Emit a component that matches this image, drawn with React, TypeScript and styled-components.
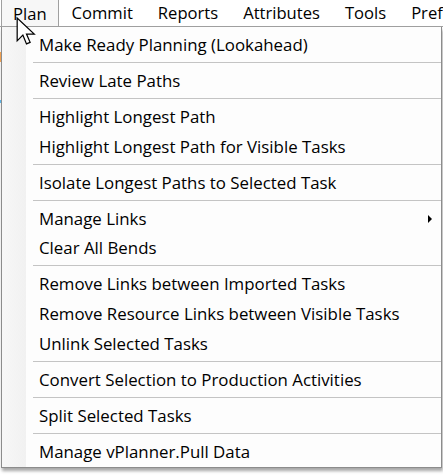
import React from "react";
import styled, { createGlobalStyle } from "styled-components";

const Global = createGlobalStyle`
  html, body { margin: 0; padding: 0; background: #ffffff; }
  body { font-family: "Open Sans", "Noto Sans", "Liberation Sans", sans-serif; color: #000; }
`;

const Page = styled.div`
  position: relative;
  width: 443px;
  height: 475px;
  overflow: hidden;
  background: #ffffff;
`;

const MenuBar = styled.div`
  display: flex;
  align-items: stretch;
  gap: 1px;
  height: 26px;
  border-bottom: 1px solid #a0a0a0;
  background: #ffffff;
  padding-left: 1px;
  overflow: hidden;
`;

const BarItem = styled.div<{ $active?: boolean }>`
  display: flex;
  align-items: center;
  flex: none;
  padding: 0 11px 1px 11px;
  font-size: 16.6px;
  white-space: nowrap;
  box-sizing: border-box;
  background: ${(p) => (p.$active ? "#f7f7f7" : "transparent")};
  border-left: 1px solid ${(p) => (p.$active ? "#a0a0a0" : "transparent")};
  border-right: 1px solid ${(p) => (p.$active ? "#a0a0a0" : "transparent")};
  margin-bottom: ${(p) => (p.$active ? "-1px" : "0")};
`;

const Dropdown = styled.div`
  margin-left: 1px;
  width: 441px;
  box-sizing: border-box;
  border: 1px solid #8c8c8c;
  border-top: none;
  padding: 3px 0 0 0;
  height: 441px;
  background:
    linear-gradient(to right, #f7f7f7 0px, #f1f1f1 24px, #fdfdfd 24px, #fdfdfd 100%);
  box-shadow: 1px 3px 3px rgba(0, 0, 0, 0.35);
  display: flex;
  flex-direction: column;
`;

const Item = styled.div`
  position: relative;
  height: 30px;
  display: flex;
  align-items: center;
  padding-left: 37px;
  padding-bottom: 1px;
  box-sizing: border-box;
  font-size: 16.85px;
  white-space: nowrap;
`;

const Separator = styled.div`
  height: 1px;
  margin: 2px 0 3px 31px;
  background: #c4c4c4;
`;

const SubArrow = styled.span`
  position: absolute;
  right: 9px;
  top: 11px;
  width: 0;
  height: 0;
  border-top: 4px solid transparent;
  border-bottom: 4px solid transparent;
  border-left: 4px solid #000;
`;

const Cursor = styled.svg`
  position: absolute;
  left: 16px;
  top: 17px;
`;

const EdgeMark = styled.div<{ $top: number; $h: number; $c: string }>`
  position: absolute;
  left: 0;
  top: ${(p) => p.$top}px;
  width: 1px;
  height: ${(p) => p.$h}px;
  background: ${(p) => p.$c};
`;

type Entry = { label: string; sub?: boolean } | "sep";

const entries: Entry[] = [
  { label: "Make Ready Planning (Lookahead)" },
  "sep",
  { label: "Review Late Paths" },
  "sep",
  { label: "Highlight Longest Path" },
  { label: "Highlight Longest Path for Visible Tasks" },
  "sep",
  { label: "Isolate Longest Paths to Selected Task" },
  "sep",
  { label: "Manage Links", sub: true },
  { label: "Clear All Bends" },
  "sep",
  { label: "Remove Links between Imported Tasks" },
  { label: "Remove Resource Links between Visible Tasks" },
  { label: "Unlink Selected Tasks" },
  "sep",
  { label: "Convert Selection to Production Activities" },
  "sep",
  { label: "Split Selected Tasks" },
  "sep",
  { label: "Manage vPlanner.Pull Data" },
];

const barItems = [
  { label: "Plan", active: true },
  { label: "Commit" },
  { label: "Reports" },
  { label: "Attributes" },
  { label: "Tools" },
  { label: "Preferences" },
];

export default function App() {
  return (
    <Page>
      <Global />
      <MenuBar>
        {barItems.map((b) => (
          <BarItem key={b.label} $active={b.active}>
            {b.label}
          </BarItem>
        ))}
      </MenuBar>
      <Dropdown>
        {entries.map((e, i) =>
          e === "sep" ? (
            <Separator key={i} />
          ) : (
            <Item key={i}>
              {e.label}
              {e.sub && <SubArrow />}
            </Item>
          )
        )}
      </Dropdown>
      <EdgeMark $top={52} $h={10} $c="#f0a050" />
      <EdgeMark $top={100} $h={3} $c="#5ab4e6" />
      <Cursor width="21" height="29" viewBox="0 0 20 28">
        <path
          d="M1 1 L1 23 L6.5 17.5 L10 26 L13.5 24.5 L10 16.5 L17.5 16.5 Z"
          fill="#ffffff"
          stroke="#000000"
          strokeWidth="1.2"
          strokeLinejoin="miter"
        />
      </Cursor>
    </Page>
  );
}
